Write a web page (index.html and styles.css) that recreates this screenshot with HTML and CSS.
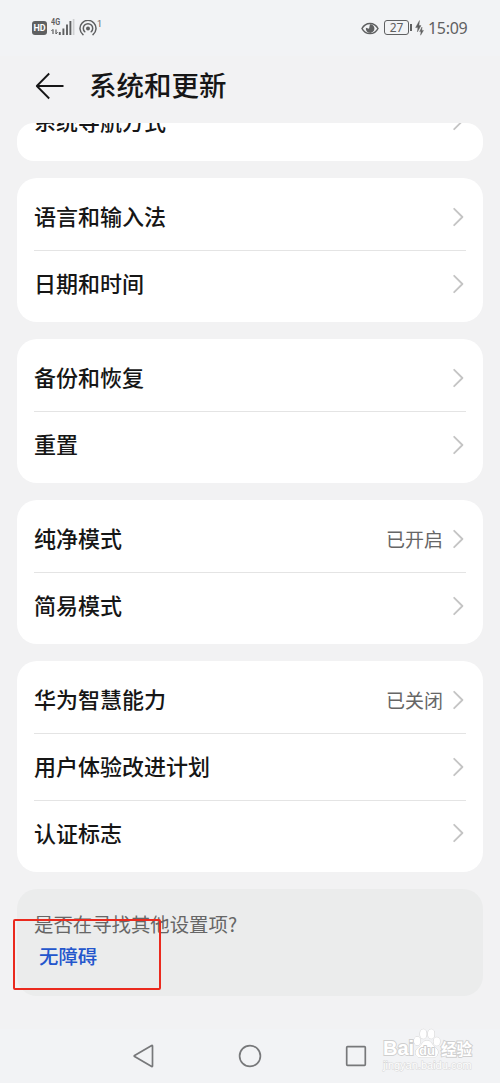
FILE: index.html
```
<!DOCTYPE html>
<html lang="zh-CN">
<head>
  <meta charset="UTF-8" />
  <meta name="viewport" content="width=device-width, initial-scale=1.0"/>
  <title>系统和更新</title>
  <link rel="stylesheet" href="styles.css">
</head>
<body>
  <!-- Shared icons -->
  <svg width="0" height="0" class="icon-defs">
    <symbol id="chevron" viewBox="0 0 11 20">
      <path d="M1.2 1.8 L9.4 10 L1.2 18.2" fill="none" stroke="#c4c4c4" stroke-width="1.8" stroke-linecap="round" stroke-linejoin="round"/>
    </symbol>
  </svg>

  <!-- Status Bar -->
  <div class="status-bar">
    <div class="status-left">
      <span class="hd-badge">HD</span>
      <div class="signal">
        <span class="signal-type">4G</span>
        <svg width="24" height="18" viewBox="0 0 24 18">
          <path d="M2 16 V11.5 M5 11.5 V16" stroke="#5f6061" stroke-width="1.2"/>
          <path d="M0.3 13 L2 11.3 M6.7 14.3 L5 16" stroke="#5f6061" stroke-width="1"/>
          <path d="M8.8 17 V14 M12.4 17 V10.5 M16 17 V6.5 M19.4 17 V3" stroke="#5f6061" stroke-width="1.9"/>
          <path d="M22.6 17 V1" stroke="#cfd0d2" stroke-width="1.7"/>
        </svg>
      </div>
      <svg class="hotspot" width="18" height="16" viewBox="0 0 18 16">
        <g fill="none" stroke="#5f6061" stroke-width="1.5" stroke-linecap="round">
          <path d="M4 14.6 A8 8 0 1 1 14 14.6"/>
          <path d="M5.8 11.8 A4.7 4.7 0 1 1 12.2 11.8"/>
        </g>
        <circle cx="9" cy="8.6" r="2" fill="#5f6061"/>
      </svg>
      <span class="hotspot-count">1</span>
    </div>
    <div class="status-right">
      <svg width="18" height="13" viewBox="0 0 18 13">
        <path d="M1 6.5 C4.5 -0.3 13.5 -0.3 17 6.5 C13.5 13.3 4.5 13.3 1 6.5 Z" fill="none" stroke="#5f6061" stroke-width="1.5"/>
        <path d="M9 2.3 A4.3 4.3 0 1 1 4.9 5.8 L8 6.8 Z" fill="#5f6061"/>
      </svg>
      <div class="battery"><span>27</span></div>
      <svg class="bolt" width="9" height="16" viewBox="0 0 9 16">
        <path d="M4.5 0.5 L0.6 7.6 H2.9 L2.4 12 L6 5.6 H3.9 Z M7 7 L4.6 11.6 H6 L5.6 15.2 L8.5 10.4 H6.8 Z" fill="#5f6061" stroke="#5f6061" stroke-width="0.4"/>
      </svg>
      <span class="time">15:09</span>
    </div>
  </div>

  <!-- Title -->
  <header class="title-bar">
    <svg width="30" height="28" viewBox="0 0 30 28">
      <path d="M14.2 1.5 L1.8 14 L14.2 26.5 M1.8 14 H28.5" fill="none" stroke="#161616" stroke-width="1.8" stroke-linejoin="round"/>
    </svg>
    <h1>系统和更新</h1>
  </header>

  <!-- Settings List -->
  <main class="settings">
    <section class="card card-scrolled">
      <div class="row"><span class="label">系统导航方式</span><svg class="chevron"><use href="#chevron"/></svg></div>
    </section>
    <section class="card">
      <div class="row"><span class="label">语言和输入法</span><svg class="chevron"><use href="#chevron"/></svg></div>
      <div class="row"><span class="label">日期和时间</span><svg class="chevron"><use href="#chevron"/></svg></div>
    </section>
    <section class="card">
      <div class="row"><span class="label">备份和恢复</span><svg class="chevron"><use href="#chevron"/></svg></div>
      <div class="row"><span class="label">重置</span><svg class="chevron"><use href="#chevron"/></svg></div>
    </section>
    <section class="card">
      <div class="row"><span class="label">纯净模式</span><span class="value">已开启</span><svg class="chevron"><use href="#chevron"/></svg></div>
      <div class="row"><span class="label">简易模式</span><svg class="chevron"><use href="#chevron"/></svg></div>
    </section>
    <section class="card">
      <div class="row"><span class="label">华为智慧能力</span><span class="value">已关闭</span><svg class="chevron"><use href="#chevron"/></svg></div>
      <div class="row"><span class="label">用户体验改进计划</span><svg class="chevron"><use href="#chevron"/></svg></div>
      <div class="row"><span class="label">认证标志</span><svg class="chevron"><use href="#chevron"/></svg></div>
    </section>
    <section class="suggest">
      <p>是否在寻找其他设置项?</p>
      <a href="#">无障碍</a>
      <div class="highlight"></div>
    </section>
  </main>

  <!-- Navigation Bar -->
  <nav class="nav-bar">
    <svg width="24" height="24" viewBox="0 0 24 24"><path d="M20.5 2 V22 Q20.5 22.8 19.7 22.4 L2.6 12.6 Q1.8 12 2.6 11.4 L19.7 1.6 Q20.5 1.2 20.5 2 Z"/></svg>
    <svg width="24" height="24" viewBox="0 0 24 24"><circle cx="12" cy="12" r="10.4"/></svg>
    <svg width="24" height="24" viewBox="0 0 24 24"><rect x="2.7" y="2.7" width="18.6" height="18.6" rx="0.8"/></svg>
  </nav>

  <!-- Watermark -->
  <div class="watermark">
    <div class="wm-logo">
      <span class="wm-bai">Bai</span>
      <svg width="28" height="31" viewBox="0 0 28 31">
        <g fill="#fff" stroke="#cfcfcf" stroke-width="0.9">
          <ellipse cx="4.2" cy="13" rx="3.2" ry="4.2"/>
          <ellipse cx="10.3" cy="6" rx="3.3" ry="4.7"/>
          <ellipse cx="18.2" cy="6" rx="3.3" ry="4.7"/>
          <ellipse cx="23.8" cy="13.5" rx="3.2" ry="4.2"/>
          <path d="M14 12.5 C18 12.5 19 17 22.5 19.5 C27 23 25 29.5 20 29.5 H8 C2 29.5 0.5 23 5.5 19.5 C9 17 10 12.5 14 12.5 Z"/>
        </g>
        <text x="14" y="27" text-anchor="middle" class="wm-du">du</text>
      </svg>
      <span class="wm-cn">经验</span>
    </div>
    <div class="wm-url">jingyan.baidu.com</div>
  </div>
</body>
</html>
```

FILE: styles.css
```
/* Base Layout */
* {
  box-sizing: border-box;
}
body {
  margin: 0;
  height: 1083px;
  display: flex;
  flex-direction: column;
  position: relative;
  overflow: hidden;
  background-color: #f2f2f3;
  color: #161616;
  font-family: "Noto Sans CJK SC", sans-serif;
}
.icon-defs {
  position: absolute;
}

/* Status Bar */
.status-bar {
  height: 56px;
  padding: 0 33px 0 32px;
  display: flex;
  justify-content: space-between;
  align-items: center;
  background-color: #f2f3f5;
  color: #5f6061;
}
.status-left,
.status-right {
  display: flex;
  align-items: center;
}
.hd-badge {
  width: 15px;
  height: 14px;
  border-radius: 3px;
  background-color: #5f6061;
  color: #fff;
  font: bold 9px/14px Roboto, sans-serif;
  text-align: center;
}
.signal {
  position: relative;
  display: flex;
  margin: -2px 0 0 4px;
}
.signal-type {
  position: absolute;
  top: 0;
  left: 0;
  font: bold 9px/9px Roboto, sans-serif;
  transform: scaleX(0.8);
  transform-origin: left;
}
.hotspot {
  margin-left: 4px;
}
.hotspot-count {
  margin: -9px 0 0 0;
  font: 9px/10px Roboto, sans-serif;
}
.battery {
  position: relative;
  width: 25px;
  height: 15px;
  margin: -1px 0 0 5px;
  border: 1.5px solid #5f6061;
  border-radius: 3px;
  font: 12px/13px "Noto Sans", sans-serif;
  text-align: center;
}
.battery::after {
  content: "";
  position: absolute;
  right: -4px;
  top: 3px;
  width: 2px;
  height: 7px;
  background-color: #5f6061;
}
.bolt {
  margin: 0 4px 0 6px;
}
.time {
  width: 39px;
  font: 16px/20px "Noto Sans", sans-serif;
  letter-spacing: -0.3px;
  white-space: nowrap;
}

/* Title */
.title-bar {
  height: 67px;
  padding: 0 35px 8px;
  display: flex;
  align-items: center;
  gap: 24px;
}
.title-bar h1 {
  margin: 0;
  padding-bottom: 3px;
  font-size: 27.5px;
  font-weight: 500;
  line-height: 40px;
}

/* Settings List */
.settings {
  padding: 0 17px;
  display: flex;
  flex-direction: column;
  gap: 17px;
}
.card {
  padding: 5.5px 17px;
  border-radius: 20px;
  background-color: #fff;
}
/* Scrolled under the title bar, only its lower part shows */
.card-scrolled {
  height: 38px;
  display: flex;
  flex-direction: column;
  justify-content: flex-end;
  overflow: hidden;
  border-radius: 17px;
}
.card-scrolled .row {
  margin-bottom: 1px;
}
.row {
  height: 66.5px;
  flex-shrink: 0;
  display: flex;
  align-items: center;
}
.row + .row {
  border-top: 1px solid #e4e4e4;
}
.label {
  flex: 1;
  padding-bottom: 3px;
  font-size: 22px;
  font-weight: 500;
  line-height: 32px;
}
.value {
  margin-right: 10px;
  font-size: 19px;
  line-height: 28px;
  color: #666;
}
.chevron {
  width: 11px;
  height: 20px;
  margin-right: 2px;
}

/* Suggestion Box */
.suggest {
  position: relative;
  height: 107px;
  padding: 20px 17px 0;
  border-radius: 20px;
  background-color: #ebecec;
  font-size: 19.4px;
  line-height: 30px;
}
.suggest p {
  margin: 0;
  color: #666;
}
.suggest a {
  display: block;
  margin: 2px 0 0 5px;
  color: #2456cc;
  font-weight: 500;
  text-decoration: none;
}
.highlight {
  position: absolute;
  left: -4px;
  top: 30px;
  width: 148px;
  height: 71px;
  border: 2px solid #ea2a1e;
  border-radius: 2px;
}

/* Navigation Bar */
.nav-bar {
  height: 54px;
  margin-top: auto;
  padding: 0 132px;
  display: flex;
  justify-content: space-between;
  align-items: center;
  background-color: #f2f3f5;
}
.nav-bar svg {
  fill: none;
  stroke: #77787a;
  stroke-width: 1.7;
}

/* Watermark */
.watermark {
  position: absolute;
  left: 383px;
  top: 1028px;
  width: 92px;
  color: #fff;
  -webkit-text-stroke: 1.8px #cfcfcf;
  paint-order: stroke fill;
}
.wm-logo {
  display: flex;
  align-items: flex-end;
  height: 31px;
}
.wm-bai {
  width: 30px;
  font: bold 20px/22px "Liberation Sans", sans-serif;
}
.wm-du {
  font: bold 13px "Liberation Sans", sans-serif;
  fill: #fff;
  stroke: #c4c4c4;
  stroke-width: 1.6px;
  -webkit-text-stroke: 0;
}
.wm-cn {
  font-size: 15.5px;
  font-weight: bold;
  line-height: 22px;
  white-space: nowrap;
}
.wm-url {
  font: 11px/13px "Liberation Sans", sans-serif;
  -webkit-text-stroke: 1px #d8d8d8;
}
```
